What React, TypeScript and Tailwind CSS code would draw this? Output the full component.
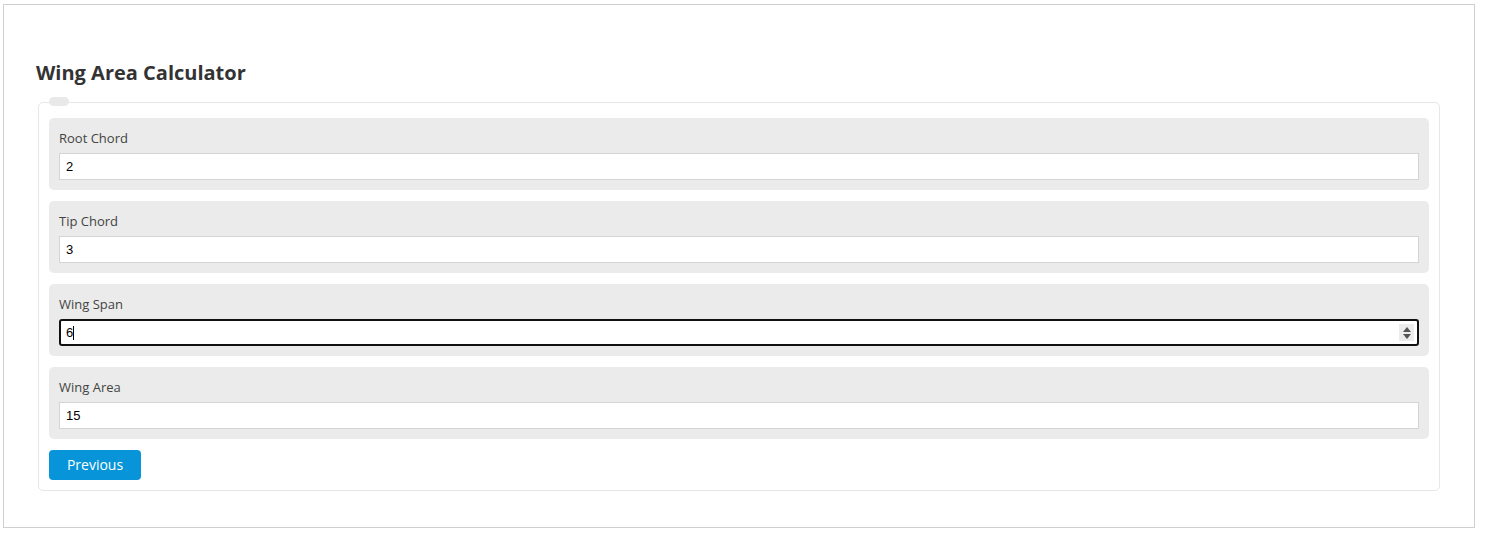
import { useState } from 'react';

const fields = [
  { label: 'Root Chord', value: '2' },
  { label: 'Tip Chord', value: '3' },
  { label: 'Wing Span', value: '6', focused: true },
  { label: 'Wing Area', value: '15' },
];

const App = () => {
  const [values, setValues] = useState(fields.map((f) => f.value));

  return (
    <div className="min-h-[545px] bg-white pt-[4px] pl-[3px]" style={{ fontFamily: '"Open Sans", sans-serif' }}>
      <div className="w-[1472px] h-[524px] border border-[#cfcfd1] bg-white px-[34px] pt-[54px]">
        <h2 className="-ml-[2px] text-[20px] leading-[28px] font-bold text-[#333333] mb-[15px]">
          Wing Area Calculator
        </h2>
        <fieldset className="relative border border-[#e6e8e6] rounded-[5px] px-[10px] pt-[15px] pb-[10px]">
          <div className="absolute left-[10px] -top-[6px] w-[20px] h-[9px] rounded-full bg-[#e8e9e8]" />
          <div className="flex flex-col gap-[11px]">
            {fields.map((f, i) => (
              <div key={f.label} className="bg-[#eaebea] rounded-[5px] px-[10px] pt-[11px] pb-[10px]">
                <label className="block text-[13px] leading-[18px] text-[#444] mb-[6px]">{f.label}</label>
                {f.focused ? (
                  <div className="flex items-center h-[27px] border-2 border-[#111] rounded-[3px] bg-white pl-[5px] pr-[3px]">
                    <span className="text-[13px] text-black" style={{ fontFamily: '"Liberation Sans", Arial, sans-serif' }}>
                      {values[i]}
                    </span>
                    <span className="w-px h-[14px] bg-black" />
                    <span className="ml-auto w-[15px] h-[17px] bg-[#ececec] flex flex-col items-center justify-center gap-[2px]">
                      <svg width="8" height="5" viewBox="0 0 8 5"><path d="M0 5 L4 0 L8 5 Z" fill="#555" /></svg>
                      <svg width="8" height="5" viewBox="0 0 8 5"><path d="M0 0 L4 5 L8 0 Z" fill="#555" /></svg>
                    </span>
                  </div>
                ) : (
                  <input
                    type="text"
                    value={values[i]}
                    onChange={(e) => setValues(values.map((v, j) => (j === i ? e.target.value : v)))}
                    className="block w-full h-[27px] border border-[#d4d4d4] bg-white px-[6px] text-[13px] text-black outline-none"
                    style={{ fontFamily: '"Liberation Sans", Arial, sans-serif' }}
                  />
                )}
              </div>
            ))}
          </div>
          <button className="mt-[11px] w-[92px] h-[30px] rounded-[4px] bg-[#0794d9] text-white text-[14px] leading-[28px]">
            Previous
          </button>
        </fieldset>
      </div>
    </div>
  );
};

export default App;
